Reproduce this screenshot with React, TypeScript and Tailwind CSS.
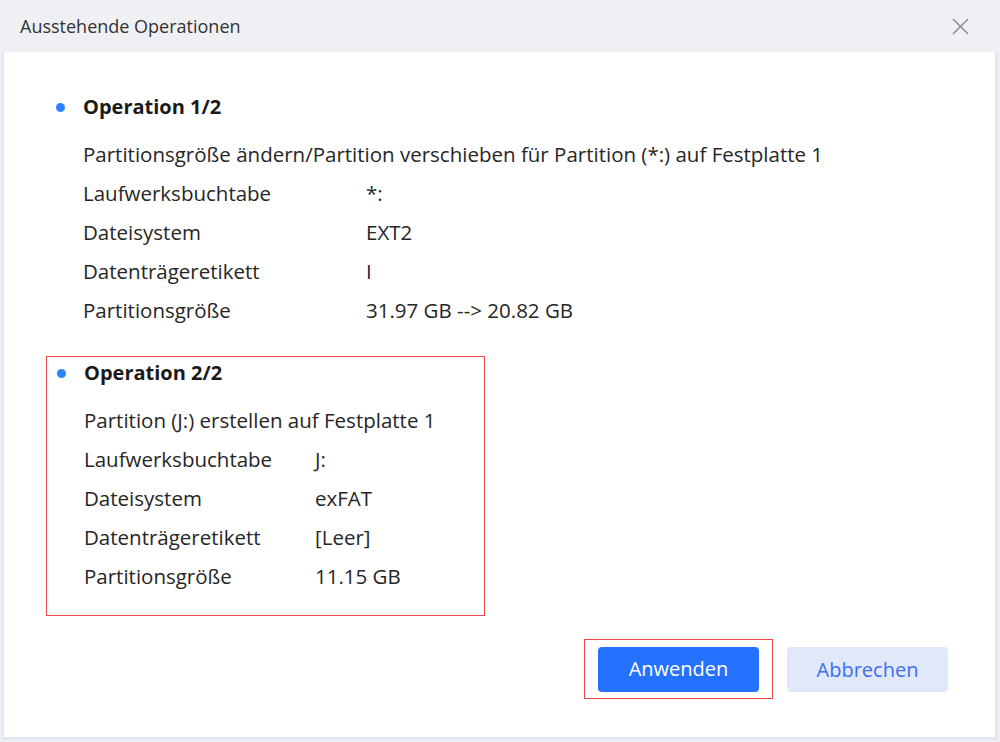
import React from 'react'

type Row = { label: string; value: string }

const op1: Row[] = [
  { label: 'Laufwerksbuchtabe', value: '*:' },
  { label: 'Dateisystem', value: 'EXT2' },
  { label: 'Datenträgeretikett', value: 'I' },
  { label: 'Partitionsgröße', value: '31.97 GB --> 20.82 GB' },
]

const op2: Row[] = [
  { label: 'Laufwerksbuchtabe', value: 'J:' },
  { label: 'Dateisystem', value: 'exFAT' },
  { label: 'Datenträgeretikett', value: '[Leer]' },
  { label: 'Partitionsgröße', value: '11.15 GB' },
]

function Operation({
  title,
  desc,
  rows,
  labelWidth,
}: {
  title: string
  desc: string
  rows: Row[]
  labelWidth: string
}) {
  return (
    <div>
      <div className="flex items-center h-[32px]">
        <span className="w-[9px] h-[9px] rounded-full bg-[#2f80ff] ml-[10px] mr-[18px]" />
        <span className="font-bold text-[20px] text-[#1a1a1a]">{title}</span>
      </div>
      <div className="pl-[37px] mt-[15px] text-[20.5px] text-[#262626]">
        <div className="h-[32px] flex items-center">{desc}</div>
        {rows.map((r) => (
          <div key={r.label} className="h-[32px] flex items-center mt-[7px]">
            <span className={labelWidth}>{r.label}</span>
            <span>{r.value}</span>
          </div>
        ))}
      </div>
    </div>
  )
}

export default function App() {
  return (
    <div
      className="w-[1000px] h-[742px] bg-[#eff0f4] flex flex-col"
      style={{ fontFamily: '"Open Sans", "Noto Sans", sans-serif' }}
    >
      {/* Title bar */}
      <div className="h-[52px] flex items-center justify-between pl-[20px] pr-[31px] shrink-0">
        <span className="text-[18px] text-[#333]">Ausstehende Operationen</span>
        <svg width="17" height="17" viewBox="0 0 18 18" stroke="#858a94" strokeWidth="1.5" fill="none">
          <line x1="1" y1="1" x2="17" y2="17" />
          <line x1="17" y1="1" x2="1" y2="17" />
        </svg>
      </div>

      {/* Body */}
      <div className="flex-1 mx-[2px] mb-[2px] bg-white border-r-[3px] border-b-[3px] border-l-[2px] border-[#e3e7f1] flex flex-col">
        <div className="pl-[42px] pt-[39px]">
          <Operation
            title="Operation 1/2"
            desc="Partitionsgröße ändern/Partition verschieben für Partition (*:) auf Festplatte 1"
            rows={op1}
            labelWidth="w-[283px]"
          />
          <div className="mt-[30px] w-[439px] h-[260px] border border-[#f0484c]">
            <Operation
              title="Operation 2/2"
              desc="Partition (J:) erstellen auf Festplatte 1"
              rows={op2}
              labelWidth="w-[231px]"
            />
          </div>
        </div>
        <div className="flex justify-end pr-[47px] mt-[23px]">
          <div className="border border-[#f0484c] w-[189px] h-[60px] flex items-center justify-center">
            <button className="w-[161px] h-[45px] rounded-[4px] bg-[#2470ff] text-white text-[20px]">
              Anwenden
            </button>
          </div>
          <button className="ml-[14px] mt-[8px] w-[161px] h-[45px] rounded-[4px] bg-[#e1e8fa] text-[#3d6ff2] text-[20px]">
            Abbrechen
          </button>
        </div>
      </div>
    </div>
  )
}
